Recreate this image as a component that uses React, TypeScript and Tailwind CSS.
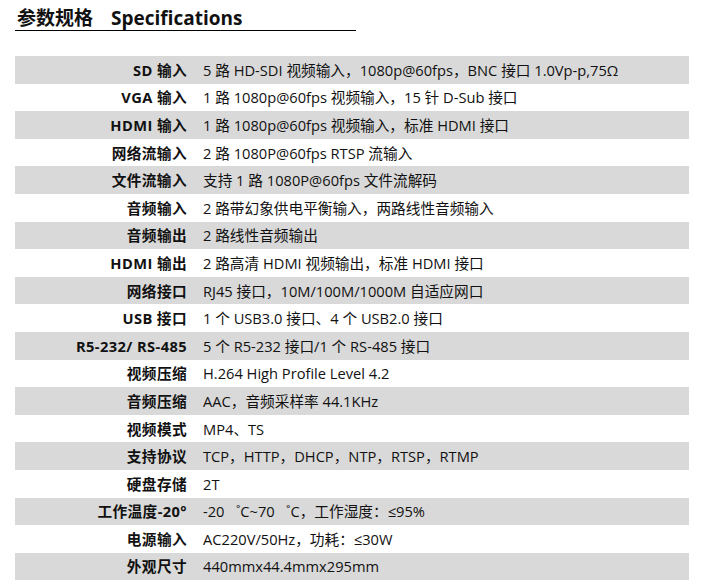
import type { ReactNode } from "react";

// wide degree sign, as the source doc renders it
const Deg = () => <span className="inline-block w-[12px] text-right">˚</span>;

const specs: [string, ReactNode][] = [
  ["SD 输入", "5 路 HD-SDI 视频输入，1080p@60fps，BNC 接口 1.0Vp-p,75Ω"],
  ["VGA 输入", "1 路 1080p@60fps 视频输入，15 针 D-Sub 接口"],
  ["HDMI 输入", "1 路 1080p@60fps 视频输入，标准 HDMI 接口"],
  ["网络流输入", "2 路 1080P@60fps RTSP 流输入"],
  ["文件流输入", "支持 1 路 1080P@60fps 文件流解码"],
  ["音频输入", "2 路带幻象供电平衡输入，两路线性音频输入"],
  ["音频输出", "2 路线性音频输出"],
  ["HDMI 输出", "2 路高清 HDMI 视频输出，标准 HDMI 接口"],
  ["网络接口", "RJ45 接口，10M/100M/1000M 自适应网口"],
  ["USB 接口", "1 个 USB3.0 接口、4 个 USB2.0 接口"],
  ["R5-232/ RS-485", "5 个 R5-232 接口/1 个 RS-485 接口"],
  ["视频压缩", "H.264 High Profile Level 4.2"],
  ["音频压缩", "AAC，音频采样率 44.1KHz"],
  ["视频模式", "MP4、TS"],
  ["支持协议", "TCP，HTTP，DHCP，NTP，RTSP，RTMP"],
  ["硬盘存储", "2T"],
  [
    "工作温度-20°",
    <>
      -20 <Deg />C~70 <Deg />C，工作湿度：≤95%
    </>,
  ],
  ["电源输入", "AC220V/50Hz，功耗：≤30W"],
  ["外观尺寸", "440mmx44.4mmx295mm"],
];

export default function App() {
  return (
    <main
      className="min-h-[586px] bg-white pl-[15px] pt-[6px] text-[#111]"
      style={{ fontFamily: '"Open Sans", "Noto Sans CJK SC", sans-serif' }}
    >
      <h1 className="w-[341px] border-b border-black pl-[2px] text-[19px] font-bold leading-[24px]">
        参数规格<span className="ml-[18px]">Specifications</span>
      </h1>

      <table className="mt-[25px] w-[674px] border-collapse text-[14.67px]">
        <tbody>
          {specs.map(([label, value], i) => (
            <tr key={label} className={i % 2 === 0 ? "bg-[#d9d9d9]" : "bg-white"}>
              <td className="h-[27.6px] w-[172px] whitespace-nowrap p-0 text-right font-bold tracking-[0.4px]">
                {label}
              </td>
              <td className="h-[27.6px] whitespace-nowrap p-0 pl-4">{value}</td>
            </tr>
          ))}
        </tbody>
      </table>
    </main>
  );
}
